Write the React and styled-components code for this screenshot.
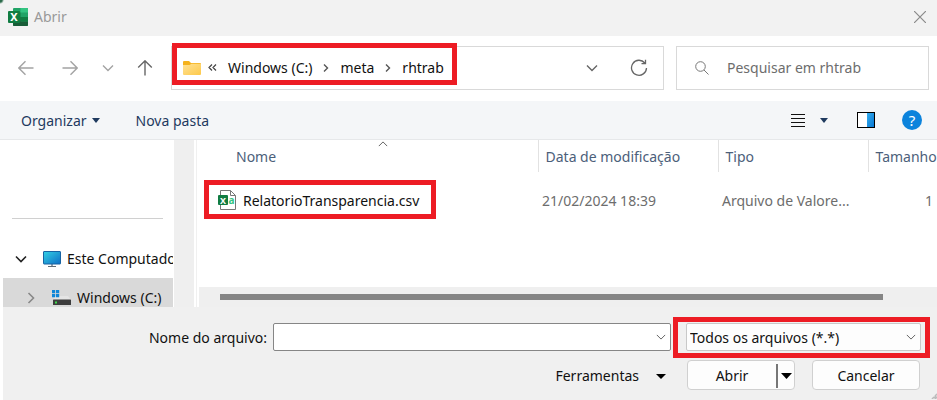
import React, { useState } from "react";
import styled, { createGlobalStyle, css } from "styled-components";

const files = [
	{
		name: "RelatorioTransparencia.csv",
		date: "21/02/2024 18:39",
		type: "Arquivo de Valore...",
		size: "1",
	},
];

const Chevron = ({ size = 12, turn = 0, color = "#666", weight = 1.4 }) => (
	<svg width={size} height={size} viewBox="0 0 12 12" fill="none" aria-hidden="true">
		<path
			d="M1 3.5 6 8.5 11 3.5"
			stroke={color}
			strokeWidth={weight}
			transform={`rotate(${turn} 6 6)`}
		/>
	</svg>
);

const Crumb = () => (
	<svg width="6" height="8" viewBox="0 0 6 8" fill="none" aria-hidden="true">
		<path d="M1 .5 4.500 4 1 7.500" stroke="#555" strokeWidth="1.400" />
	</svg>
);

const Caret = ({ width = 8, height = 5, color = "#1f3a5f" }) => (
	<svg width={width} height={height} viewBox="0 0 8 5" preserveAspectRatio="none" aria-hidden="true">
		<path d="M0 0H8L4 5Z" fill={color} />
	</svg>
);

const Arrow = ({ turn = 0, color = "#a3a3a3" }) => (
	<svg width="16" height="16" viewBox="0 0 16 16" fill="none" aria-hidden="true">
		<path
			d="M15.5 8H1M7.5 1.2.8 8l6.700 6.800"
			stroke={color}
			strokeWidth="1.4"
			transform={`rotate(${turn} 8 8)`}
		/>
	</svg>
);

const ExcelIcon = () => (
	<svg width="20" height="18" viewBox="0 0 20 18" aria-hidden="true">
		<rect x="5" width="15" height="18" rx="1" fill="#21a366" />
		<path d="M12.500 0H19a1 1 0 0 1 1 1V4.500H12.500Z" fill="#33c481" />
		<path d="M5 4.500H12.500V9H5Z" fill="#107c41" />
		<path d="M12.500 9H20V13.500H12.500Z" fill="#107c41" />
		<path d="M5 9H12.500V13.500H20V17a1 1 0 0 1-1 1H6a1 1 0 0 1-1-1Z" fill="#185c37" />
		<rect y="3" width="12" height="12" rx="1" fill="#107c41" />
		<text x="6" y="13" fontSize="11" fontWeight="700" textAnchor="middle" fill="#fff">
			X
		</text>
	</svg>
);

const CsvIcon = () => (
	<svg width="18" height="20" viewBox="0 0 18 20" aria-hidden="true">
		<path d="M2.500.5H12.500L17.500 5.500V19.500H2.500Z" fill="#fff" stroke="#777" />
		<path d="M12.500.5V5.500H17.500" fill="none" stroke="#777" />
		<rect y="5" width="10" height="10" rx="1" fill="#107c41" />
		<text x="5" y="13.500" fontSize="9" fontWeight="700" textAnchor="middle" fill="#fff">
			X
		</text>
		<text x="13.500" y="14" fontSize="10" fontWeight="700" textAnchor="middle" fill="#33c481">
			a
		</text>
	</svg>
);

const FolderIcon = () => (
	<svg width="18" height="14" viewBox="0 0 18 14" aria-hidden="true">
		<defs>
			<linearGradient id="folder" x1="0" y1="0" x2="1" y2="1">
				<stop offset="0" stopColor="#ffe194" />
				<stop offset="1" stopColor="#fdc94a" />
			</linearGradient>
		</defs>
		<path d="M0 1a1 1 0 0 1 1-1H6L8 2H17a1 1 0 0 1 1 1V8H0Z" fill="#f5b21c" />
		<path d="M0 4H6.500L8.500 2.800H18V13a1 1 0 0 1-1 1H1a1 1 0 0 1-1-1Z" fill="url(#folder)" />
	</svg>
);

const MonitorIcon = () => (
	<svg width="18" height="16" viewBox="0 0 18 16" aria-hidden="true">
		<defs>
			<linearGradient id="screen" x1="0" y1="0" x2="1" y2="1">
				<stop offset="0" stopColor="#32d0e4" />
				<stop offset="1" stopColor="#0f6fc6" />
			</linearGradient>
		</defs>
		<rect x="8" y="13" width="2" height="2" fill="#9aa3aa" />
		<rect x="5" y="15" width="8" height="1" fill="#5f6b75" />
		<rect x=".5" y=".5" width="17" height="12.500" rx=".5" fill="url(#screen)" stroke="#1763a3" />
	</svg>
);

const DriveIcon = () => (
	<svg width="19" height="16" viewBox="0 0 19 16" aria-hidden="true">
		<path d="M3 6H16L19 10H1Z" fill="#e4e4e4" />
		<path d="M0 0H3.200V3.200H0ZM4 0H7.200V3.200H4ZM0 4H3.200V7.200H0ZM4 4H7.200V7.200H4Z" fill="#0f86d8" />
		<rect x="1" y="9.500" width="18" height="5.500" rx=".5" fill="#3d3d3d" />
		<rect x="3" y="11.500" width="2" height="2" fill="#3fdc4b" />
	</svg>
);

const RefreshIcon = () => (
	<svg width="18" height="18" viewBox="0 0 18 18" fill="none" stroke="#666" strokeWidth="1.300" aria-hidden="true">
		<path d="M14.800 4A7.500 7.500 0 1 0 16.500 9M15.500.8V4.700H11.500" />
	</svg>
);

const SearchIcon = () => (
	<svg width="14" height="14" viewBox="0 0 14 14" fill="none" stroke="#777" aria-hidden="true">
		<circle cx="5.500" cy="5.500" r="4.800" />
		<path d="M9 9 13.500 13.500" />
	</svg>
);

const App = () => {
	const [fileName, setFileName] = useState("");
	const [search, setSearch] = useState("");

	return (
		<>
			<GlobalStyle />
			<Dialog>
				<TitleBar>
					<ExcelIcon />
					<h1>Abrir</h1>
					<IconButton $width={34} aria-label="Fechar">
						<svg width="12" height="12" viewBox="0 0 12 12" stroke="#8a8a8a" strokeWidth="1.200">
							<path d="M0 0 12 12M12 0 0 12" />
						</svg>
					</IconButton>
				</TitleBar>

				<NavBar>
					<NavButtons>
						<IconButton $width={44} aria-label="Voltar">
							<Arrow />
						</IconButton>
						<IconButton $width={44} aria-label="Avançar">
							<Arrow turn={180} />
						</IconButton>
						<IconButton $width={32} aria-label="Locais recentes">
							<Chevron color="#a3a3a3" />
						</IconButton>
						<IconButton $width={42} aria-label="Acima">
							<Arrow turn={90} color="#666" />
						</IconButton>
					</NavButtons>
					<AddressBar>
						<Breadcrumb aria-label="Caminho">
							<FolderIcon />
							<svg className="more" width="9" height="7" viewBox="0 0 9 7" fill="none" stroke="#444" strokeWidth="1.200">
								<path d="M4 .5 1 3.500l3 3M8 .5 5 3.500l3 3" />
							</svg>
							<a href="#c">Windows (C:)</a>
							<Crumb />
							<a href="#meta">meta</a>
							<Crumb />
							<a href="#rhtrab">rhtrab</a>
						</Breadcrumb>
						<IconButton $width={46} aria-label="Locais anteriores">
							<Chevron />
						</IconButton>
						<IconButton $width={48} aria-label="Atualizar">
							<RefreshIcon />
						</IconButton>
					</AddressBar>
					<SearchBox>
						<SearchIcon />
						<input
							aria-label="Pesquisar"
							placeholder="Pesquisar em rhtrab"
							value={search}
							onChange={(e) => setSearch(e.target.value)}
						/>
					</SearchBox>
				</NavBar>

				<Toolbar>
					<ToolButton>
						Organizar <Caret />
					</ToolButton>
					<ToolButton>Nova pasta</ToolButton>
					<ViewTools>
						<IconButton $width={26} aria-label="Exibição">
							<svg width="14" height="13" viewBox="0 0 14 13" fill="#111">
								<path d="M0 0H14V1H0ZM0 4H14V5H0ZM0 8H14V9H0ZM0 12H14V13H0Z" />
							</svg>
						</IconButton>
						<IconButton $width={26} aria-label="Mais opções">
							<Caret />
						</IconButton>
						<IconButton $width={58} aria-label="Painel de visualização">
							<svg width="18" height="16" viewBox="0 0 18 16">
								<defs>
									<linearGradient id="pane" x1="0" y1="0" x2="1" y2="1">
										<stop offset="0" stopColor="#35aef0" />
										<stop offset="1" stopColor="#0877d2" />
									</linearGradient>
								</defs>
								<rect x=".5" y=".5" width="17" height="15" fill="#fff" stroke="#000" />
								<rect x="10" y="1" width="7" height="14" fill="url(#pane)" />
							</svg>
						</IconButton>
						<IconButton $width={34} aria-label="Ajuda">
							<svg width="20" height="20" viewBox="0 0 20 20">
								<circle cx="10" cy="10" r="10" fill="#0c83dc" />
								<text x="10" y="15.500" fontSize="15" textAnchor="middle" fill="#fff">
									?
								</text>
							</svg>
						</IconButton>
					</ViewTools>
				</Toolbar>

				<Content>
					<Sidebar>
						<hr />
						<TreeItem>
							<Chevron color="#222" weight={1.6} />
							<MonitorIcon />
							<span>Este Computador</span>
						</TreeItem>
						<TreeItem $selected>
							<Chevron color="#888" turn={-90} weight={1.6} />
							<DriveIcon />
							<span>Windows (C:)</span>
						</TreeItem>
					</Sidebar>
					<SideScroll />
					<FilePane>
						<FileTable>
							<colgroup>
								<col />
								<col className="date" />
								<col className="type" />
								<col className="size" />
							</colgroup>
							<thead>
								<tr>
									<th>
										<SortMark>
											<Chevron size={10} turn={180} weight={1.2} />
										</SortMark>
										Nome
									</th>
									<th>Data de modificação</th>
									<th>Tipo</th>
									<th>Tamanho</th>
								</tr>
							</thead>
							<tbody>
								{files.map((file) => (
									<tr key={file.name}>
										<td>
											<FileName>
												<CsvIcon />
												<span>{file.name}</span>
											</FileName>
										</td>
										<td>{file.date}</td>
										<td>{file.type}</td>
										<td>{file.size}</td>
									</tr>
								))}
							</tbody>
						</FileTable>
						<BottomScroll>
							<div />
						</BottomScroll>
					</FilePane>
				</Content>

				<Footer>
					<FooterRow>
						<label htmlFor="file-name">Nome do arquivo:</label>
						<Field $grow>
							<input
								id="file-name"
								value={fileName}
								onChange={(e) => setFileName(e.target.value)}
							/>
							<Chevron size={10} weight={1.2} />
						</Field>
						<Field $marked>
							<select aria-label="Tipo de arquivo">
								<option>Todos os arquivos (*.*)</option>
							</select>
							<Chevron size={10} weight={1.2} />
						</Field>
					</FooterRow>
					<FooterRow $end>
						<ToolsButton>
							Ferramentas <Caret width={10} color="#000" />
						</ToolsButton>
						<SplitButton>
							<button>Abrir</button>
							<button aria-label="Opções de abertura">
								<Caret width={11} height={6} color="#000" />
							</button>
						</SplitButton>
						<PushButton>Cancelar</PushButton>
					</FooterRow>
					<Grip />
				</Footer>
			</Dialog>
		</>
	);
};

export default App;

const GlobalStyle = createGlobalStyle`
	* {
		box-sizing: border-box;
	}
	body {
		margin: 0;
		background: #fff;
	}
	body, button, input, select {
		font-family: "Noto Sans", "Open Sans", sans-serif;
		font-size: 14px;
		line-height: 20px;
		color: #111;
	}
	button {
		border: 0;
		padding: 0;
		background: none;
	}
	svg {
		flex: none;
	}
`;

const highlight = css`
	content: "";
	position: absolute;
	border: 5px solid #ed1c24;
	pointer-events: none;
`;

const Dialog = styled.main`
	display: flex;
	flex-direction: column;
	height: 100vh;
	overflow: hidden;
`;

const IconButton = styled.button`
	display: flex;
	flex: none;
	align-items: center;
	justify-content: center;
	width: ${(props) => props.$width}px;
	height: 32px;
`;

const TitleBar = styled.header`
	display: flex;
	flex: none;
	align-items: center;
	gap: 6px;
	height: 36px;
	padding: 0 0 2px 8px;
	background: radial-gradient(circle at 0 0, #2b6a4a 2px, #f2f2f2 4px);
	h1 {
		flex: 1;
		margin: 0;
		font-size: 14px;
		font-weight: 400;
		line-height: 20px;
		color: #999;
	}
`;

const NavBar = styled.div`
	display: flex;
	flex: none;
	align-items: center;
	height: 65px;
	padding: 0 8px 1px 4px;
`;

const NavButtons = styled.div`
	display: flex;
	margin-right: 5px;
`;

const AddressBar = styled.div`
	display: flex;
	flex: 1;
	align-items: center;
	height: 44px;
	margin-right: 12px;
	border: 1px solid #d9d9d9;
`;

const Breadcrumb = styled.nav`
	position: relative;
	display: flex;
	align-items: center;
	gap: 11px;
	height: 42px;
	padding: 0 13px 0 11px;
	margin-right: auto;
	a {
		color: #111;
		text-decoration: none;
	}
	.more {
		margin: 0 0 2px -4px;
	}
	&::after {
		${highlight}
		inset: -4px 0 4px;
	}
`;

const SearchBox = styled.div`
	display: flex;
	flex: 0 0 253px;
	align-items: center;
	gap: 18px;
	min-width: 0;
	height: 44px;
	padding: 0 18px;
	border: 1px solid #d9d9d9;
	input {
		flex: 1;
		min-width: 0;
		padding: 0;
		border: 0;
		outline: 0;
	}
	input::placeholder {
		color: #6d6d6d;
	}
`;

const Toolbar = styled.div`
	display: flex;
	flex: none;
	align-items: center;
	gap: 36px;
	height: 39px;
	padding: 0 8px 0 21px;
	border-bottom: 1px solid #e6e8ea;
	background: #f4f6f8;
`;

const ToolButton = styled.button`
	display: flex;
	align-items: center;
	gap: 5px;
	padding-top: 1px;
	color: #1f3a5f;
`;

const ViewTools = styled.div`
	display: flex;
	margin-left: auto;
`;

const Content = styled.div`
	display: flex;
	flex: 1;
	min-height: 0;
`;

const Sidebar = styled.aside`
	width: 173px;
	padding-left: 3px;
	overflow: hidden;
	hr {
		margin: 78px 10px 20px 9px;
		border: 0;
		border-top: 1px solid #d0d0d0;
	}
`;

const TreeItem = styled.div`
	display: flex;
	align-items: center;
	gap: 6px;
	height: ${(props) => (props.$selected ? 40 : 39)}px;
	padding-left: ${(props) => (props.$selected ? 22 : 12)}px;
	background: ${(props) => (props.$selected ? "#d9d9d9" : "none")};
	white-space: nowrap;
	svg:first-child {
		margin-right: ${(props) => (props.$selected ? 9 : 10)}px;
	}
`;

const SideScroll = styled.div`
	width: 20px;
	margin: 0 2px 0 1px;
	background: #efefef;
`;

const FilePane = styled.section`
	display: flex;
	flex: 1;
	flex-direction: column;
	justify-content: space-between;
	min-width: 0;
	border-left: 1px solid #f0f0f0;
	padding-left: 2px;
`;

const FileTable = styled.table`
	width: 100%;
	table-layout: fixed;
	border-collapse: collapse;
	white-space: nowrap;
	.date {
		width: 180px;
	}
	.type {
		width: 150px;
	}
	.size {
		width: 69px;
	}
	th {
		position: relative;
		height: 32px;
		padding: 2px 0 0 7px;
		border-left: 1px solid #e2e2e2;
		font-weight: 400;
		text-align: left;
		color: #4c607a;
	}
	th:first-child {
		padding-left: 37px;
		border-left: 0;
	}
	td {
		padding: 10px 0 0 4px;
		color: #6d6d6d;
	}
	td:first-child {
		padding: 8px 0 0 5px;
	}
	td:last-child {
		padding-right: 4px;
		text-align: right;
	}
`;

const SortMark = styled.span`
	position: absolute;
	top: -6px;
	left: 179px;
`;

const FileName = styled.div`
	display: inline-flex;
	align-items: center;
	gap: 7px;
	height: 39px;
	padding: 0 12px 0 9px;
	border: 5px solid #ed1c24;
	color: #111;
	vertical-align: middle;
	span {
		padding-top: 2px;
	}
`;

const BottomScroll = styled.div`
	height: 20px;
	padding: 7px 54px 7px 21px;
	background: #efefef;
	div {
		height: 6px;
		background: #858585;
	}
`;

const Footer = styled.footer`
	position: relative;
	display: flex;
	flex: none;
	flex-direction: column;
	gap: 9px;
	padding: 16px 16px 10px 0;
	border-left: 3px solid #fff;
	background: #f0f0f0;
`;

const FooterRow = styled.div`
	display: flex;
	align-items: center;
	justify-content: ${(props) => (props.$end ? "flex-end" : "flex-start")};
	padding-right: ${(props) => (props.$end ? 1 : 0)}px;
	label {
		width: 264px;
		padding-top: 2px;
		margin-right: 6px;
		text-align: right;
	}
`;

const Field = styled.div`
	position: relative;
	display: flex;
	flex: ${(props) => (props.$grow ? "1" : "0 0 235px")};
	align-items: center;
	height: 28px;
	margin-left: ${(props) => (props.$marked ? 15 : 0)}px;
	input,
	select {
		width: 100%;
		height: 100%;
		padding: 2px 24px 0 3px;
		border: 1px solid ${(props) => (props.$marked ? "#c8c8c8" : "#868686")};
		border-radius: 2px;
		outline: 0;
		appearance: none;
		background: ${(props) => (props.$marked ? "#fdfdfd" : "#fff")};
	}
	svg {
		position: absolute;
		right: 5px;
		pointer-events: none;
	}
	&::after {
		${(props) => props.$marked && highlight}
		inset: -6px -9px -7px -13px;
	}
`;

const ToolsButton = styled.button`
	display: flex;
	align-items: center;
	gap: 17px;
	padding-top: 2px;
	margin-right: 21px;
`;

const buttonFace = css`
	width: 108px;
	height: 30px;
	padding-top: 1px;
	border: 1px solid #d0d0d0;
	border-radius: 4px;
	background: #fdfdfd;
`;

const SplitButton = styled.div`
	${buttonFace}
	display: flex;
	align-items: center;
	margin-right: 17px;
	button {
		flex: 1;
	}
	button:last-child {
		display: flex;
		flex: 0 0 18px;
		align-items: center;
		justify-content: center;
		height: 24px;
		border-left: 2px solid #777;
	}
`;

const PushButton = styled.button`
	${buttonFace}
`;

const Grip = styled.span`
	position: absolute;
	right: 0;
	bottom: 1px;
	width: 6px;
	height: 6px;
	background: radial-gradient(circle, #bbb 1px, transparent 2px) 0 0 / 3px 3px;
	clip-path: polygon(100% 0, 100% 100%, 0 100%);
`;
